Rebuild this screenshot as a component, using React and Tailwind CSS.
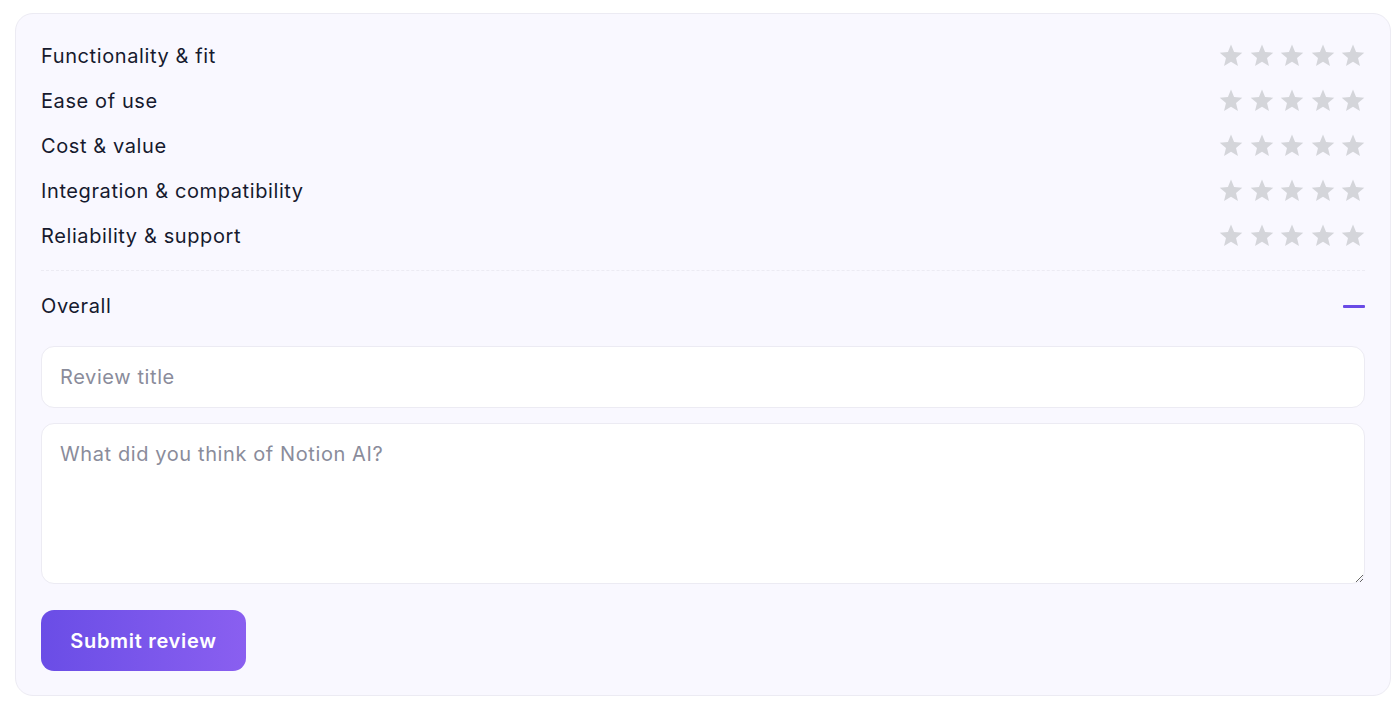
import React from "react";

const criteria = [
  "Functionality & fit",
  "Ease of use",
  "Cost & value",
  "Integration & compatibility",
  "Reliability & support",
];

function Star() {
  return (
    <svg width="24" height="24" viewBox="0 0 24 24" className="block">
      <path
        d="M12 1.5l3.09 7.6 8.2.62-6.28 5.31 1.96 7.97L12 18.7l-6.97 4.3 1.96-7.97L.71 9.72l8.2-.62z"
        fill="#d4d5da"
      />
    </svg>
  );
}

function Stars() {
  return (
    <div className="flex items-center gap-[6.5px] -mt-[2px]">
      {[0, 1, 2, 3, 4].map((i) => (
        <Star key={i} />
      ))}
    </div>
  );
}

export default function App() {
  return (
    <div
      className="bg-white w-[1400px] h-[715px] pt-[13px] pl-[15px]"
      style={{ fontFamily: "Inter, 'Noto Sans', sans-serif" }}
    >
      <div className="w-[1376px] rounded-[18px] border border-[#ecebf3] bg-[#f9f8ff] px-[25px] pt-[19px] pb-[24px]">
        <div className="flex flex-col">
          {criteria.map((c) => (
            <div key={c} className="flex items-center justify-between h-[45px]">
              <span className="text-[20px] text-[#161a2e] tracking-[0.6px]">{c}</span>
              <Stars />
            </div>
          ))}
        </div>
        <div className="mt-[12px] border-t border-dashed border-[#ecebf3]" />
        <div className="flex items-center justify-between h-[70px]">
          <span className="text-[20px] text-[#161a2e] tracking-[0.6px]">Overall</span>
          <div className="w-[22px] h-[3px] bg-[#6a4be6] rounded-[1px]" />
        </div>
        <input
          className="mt-[5px] block w-full h-[62px] rounded-[13px] border border-[#ecebf3] bg-white px-[18px] text-[20px] tracking-[0.6px] text-[#161a2e] placeholder:text-[#8a8c9b] outline-none"
          placeholder="Review title"
        />
        <textarea
          className="mt-[15px] block w-full h-[161px] rounded-[13px] border border-[#ecebf3] bg-white px-[18px] py-[15px] text-[20px] tracking-[0.6px] text-[#161a2e] placeholder:text-[#8a8c9b] outline-none"
          placeholder="What did you think of Notion AI?"
        />
        <button className="mt-[26px] w-[205px] h-[61px] rounded-[13px] bg-gradient-to-r from-[#6a4de6] to-[#8a5ff0] text-white font-semibold text-[20px] tracking-[0.7px]">
          Submit review
        </button>
      </div>
    </div>
  );
}
